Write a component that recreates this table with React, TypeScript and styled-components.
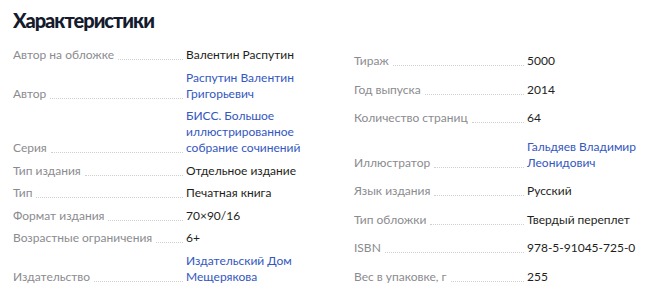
import styled, { createGlobalStyle } from "styled-components";

const GlobalStyle = createGlobalStyle`
  html, body {
    margin: 0;
    padding: 0;
    background: #fff;
  }
  body {
    font-family: Lato, "Noto Sans", Arial, sans-serif;
  }
`;

interface Spec {
  label: string;
  value: string[];
  link?: boolean;
}

const leftSpecs: Spec[] = [
  { label: "Автор на обложке", value: ["Валентин Распутин"] },
  { label: "Автор", value: ["Распутин Валентин", "Григорьевич"], link: true },
  {
    label: "Серия",
    value: ["БИСС. Большое", "иллюстрированное", "собрание сочинений"],
    link: true,
  },
  { label: "Тип издания", value: ["Отдельное издание"] },
  { label: "Тип", value: ["Печатная книга"] },
  { label: "Формат издания", value: ["70×90/16"] },
  { label: "Возрастные ограничения", value: ["6+"] },
  { label: "Издательство", value: ["Издательский Дом", "Мещерякова"], link: true },
];

const rightSpecs: Spec[] = [
  { label: "Тираж", value: ["5000"] },
  { label: "Год выпуска", value: ["2014"] },
  { label: "Количество страниц", value: ["64"] },
  { label: "Иллюстратор", value: ["Гальдяев Владимир", "Леонидович"], link: true },
  { label: "Язык издания", value: ["Русский"] },
  { label: "Тип обложки", value: ["Твердый переплет"] },
  { label: "ISBN", value: ["978-5-91045-725-0"] },
  { label: "Вес в упаковке, г", value: ["255"] },
];

const Section = styled.section`
  padding: 8px 0 0 13px;
  width: 659px;
  box-sizing: border-box;
`;

const Title = styled.h2`
  margin: 0;
  font-family: Lato, "Noto Sans", sans-serif;
  font-weight: 900;
  font-size: 20px;
  line-height: 24px;
  letter-spacing: -1px;
  color: #151a2d;
`;

const Columns = styled.div`
  display: grid;
  grid-template-columns: 298px 298px;
  column-gap: 43px;
  margin-top: 15px;
`;

const List = styled.div<{ $gap: number; $offset: number }>`
  display: flex;
  flex-direction: column;
  gap: ${({ $gap }) => $gap}px;
  padding-top: ${({ $offset }) => $offset}px;
`;

const Row = styled.div`
  display: flex;
  align-items: flex-end;
  font-size: 12px;
  line-height: 16px;
`;

const Label = styled.div`
  width: 173px;
  flex-shrink: 0;
  display: flex;
  align-items: flex-end;
  color: #8b8b8f;
`;

const Dots = styled.span`
  flex: 1;
  margin: 0 3px 3px 4px;
  border-bottom: 1px dotted #cfcfd2;
`;

const Value = styled.div<{ $link?: boolean }>`
  color: ${({ $link }) => ($link ? "#3457c0" : "#1e1e22")};
`;

const SpecList = ({ specs, gap, offset }: { specs: Spec[]; gap: number; offset: number }) => (
  <List $gap={gap} $offset={offset}>
    {specs.map((s) => (
      <Row key={s.label}>
        <Label>
          {s.label}
          <Dots />
        </Label>
        <Value $link={s.link}>
          {s.value.map((line) => (
            <div key={line}>{line}</div>
          ))}
        </Value>
      </Row>
    ))}
  </List>
);

export default function App() {
  return (
    <>
      <GlobalStyle />
      <Section>
        <Title>Характеристики</Title>
        <Columns>
          <SpecList specs={leftSpecs} gap={6.5} offset={0} />
          <SpecList specs={rightSpecs} gap={12.5} offset={6} />
        </Columns>
      </Section>
    </>
  );
}
